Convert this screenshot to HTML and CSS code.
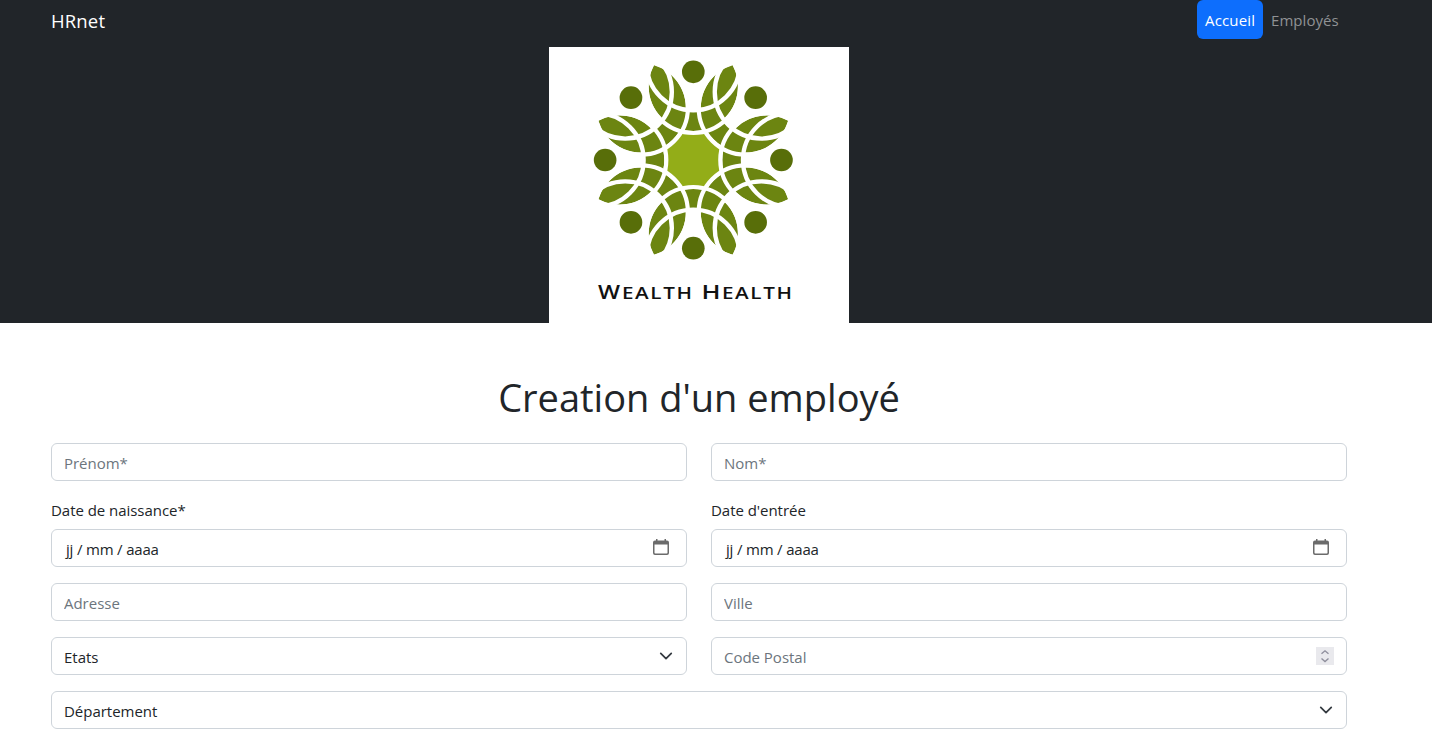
FILE: index.html
```html
<!DOCTYPE html>
<html lang="fr">
<head>
<meta charset="utf-8">
<title>HRnet</title>
<link rel="stylesheet" href="styles.css">
</head>
<body>
<header class="header">
  <nav class="navbar">
    <a class="brand"><span>HRnet</span></a>
    <div class="nav-links">
      <a class="nav-link active"><span>Accueil</span></a>
      <a class="nav-link"><span>Employés</span></a>
    </div>
  </nav>
  <svg class="logo" viewBox="0 0 300 276" role="img" aria-label="Wealth Health">
    <defs>
      <g id="crescent"><path d="M-132.200-242.900A134 134 0 1 0 132.200-242.900A140 140 0 0 1-132.200-242.900Z"/></g>
      <g id="leaf"><path d="M0-181.200A140 140 0 0 1-29.100-275A134 134 0 0 1 0-308A134 134 0 0 1 29.100-275A140 140 0 0 1 0-181.200Z"/></g>
      <g id="rings"><circle cy="-221" r="140" stroke-width="12.5"/><circle cy="-289" r="140" stroke-width="13"/></g>
      <circle id="hole" cy="-221" r="142"/>
      <circle id="dot" cy="-264.500" r="34"/>
    </defs>
    <rect width="300" height="276" fill="#fff"/>
    <g transform="translate(144.3 113) scale(.3333)">
      <circle r="92" fill="#93ad18"/>
      <g fill="#fff">
        <use href="#hole"/><use href="#hole" transform="rotate(45)"/><use href="#hole" transform="rotate(90)"/><use href="#hole" transform="rotate(135)"/><use href="#hole" transform="rotate(180)"/><use href="#hole" transform="rotate(225)"/><use href="#hole" transform="rotate(270)"/><use href="#hole" transform="rotate(315)"/>
      </g>
      <g fill="#6c8511">
        <use href="#crescent"/><use href="#crescent" transform="rotate(45)"/><use href="#crescent" transform="rotate(90)"/><use href="#crescent" transform="rotate(135)"/><use href="#crescent" transform="rotate(180)"/><use href="#crescent" transform="rotate(225)"/><use href="#crescent" transform="rotate(270)"/><use href="#crescent" transform="rotate(315)"/>
        <use href="#leaf" transform="rotate(22.5)"/><use href="#leaf" transform="rotate(67.5)"/><use href="#leaf" transform="rotate(112.5)"/><use href="#leaf" transform="rotate(157.5)"/><use href="#leaf" transform="rotate(202.5)"/><use href="#leaf" transform="rotate(247.5)"/><use href="#leaf" transform="rotate(292.5)"/><use href="#leaf" transform="rotate(337.5)"/>
      </g>
      <g fill="none" stroke="#fff">
        <use href="#rings"/><use href="#rings" transform="rotate(45)"/><use href="#rings" transform="rotate(90)"/><use href="#rings" transform="rotate(135)"/><use href="#rings" transform="rotate(180)"/><use href="#rings" transform="rotate(225)"/><use href="#rings" transform="rotate(270)"/><use href="#rings" transform="rotate(315)"/>
      </g>
      <g fill="#586e09">
        <use href="#dot"/><use href="#dot" transform="rotate(45)"/><use href="#dot" transform="rotate(90)"/><use href="#dot" transform="rotate(135)"/><use href="#dot" transform="rotate(180)"/><use href="#dot" transform="rotate(225)"/><use href="#dot" transform="rotate(270)"/><use href="#dot" transform="rotate(315)"/>
      </g>
    </g>
    <g class="logo-name">
      <text class="cap" x="49" y="252" textLength="22" lengthAdjust="spacingAndGlyphs">W</text>
      <text class="small" x="73" y="252" textLength="71.500" lengthAdjust="spacingAndGlyphs">EALTH</text>
      <text class="cap" x="152.500" y="252" textLength="19" lengthAdjust="spacingAndGlyphs">H</text>
      <text class="small" x="173" y="252" textLength="71.500" lengthAdjust="spacingAndGlyphs">EALTH</text>
    </g>
  </svg>
</header>
<main class="content">
  <h1 class="title"><span>Creation d'un employé</span></h1>
  <form class="form">
    <input class="control" type="text" placeholder="Prénom*">
    <input class="control" type="text" placeholder="Nom*">
    <div class="field">
      <label class="label"><span>Date de naissance*</span></label>
      <div class="control date"><span>jj / mm / aaaa</span>
        <svg class="calendar" viewBox="0 0 16 17"><path fill="#6b6b6b" fill-rule="evenodd" d="M3 0h1.500v1.500h7V0H13v1.500h1a2 2 0 0 1 2 2V14a2 2 0 0 1-2 2H2a2 2 0 0 1-2-2V3.500a2 2 0 0 1 2-2h1zM1.500 5.500v8.300q0 .8.8.800h11.400q.8 0 .8-.8V5.500z"/></svg>
      </div>
    </div>
    <div class="field">
      <label class="label"><span>Date d'entrée</span></label>
      <div class="control date"><span>jj / mm / aaaa</span>
        <svg class="calendar" viewBox="0 0 16 17"><path fill="#6b6b6b" fill-rule="evenodd" d="M3 0h1.500v1.500h7V0H13v1.500h1a2 2 0 0 1 2 2V14a2 2 0 0 1-2 2H2a2 2 0 0 1-2-2V3.500a2 2 0 0 1 2-2h1zM1.500 5.500v8.300q0 .8.8.800h11.400q.8 0 .8-.8V5.500z"/></svg>
      </div>
    </div>
    <input class="control" type="text" placeholder="Adresse">
    <input class="control" type="text" placeholder="Ville">
    <div class="control select"><span>Etats</span>
      <svg class="chevron" viewBox="0 0 16 16"><path d="m2 5 6 6 6-6"/></svg>
    </div>
    <div class="control number"><span>Code Postal</span>
      <svg class="spinner" viewBox="0 0 18 18"><rect width="18" height="18" fill="#e9e9ed"/><path d="M5.500 6.800 9 3.800l3.500 3M5.500 11.500l3.500 3 3.500-3" fill="none" stroke="#8f8f9d" stroke-width="1.400"/></svg>
    </div>
    <div class="control select wide"><span>Département</span>
      <svg class="chevron" viewBox="0 0 16 16"><path d="m2 5 6 6 6-6"/></svg>
    </div>
  </form>
</main>
</body>
</html>
```

FILE: styles.css
```css
* { box-sizing: border-box; }
body {
  margin: 0;
  height: 741px;
  overflow: hidden;
  background: #fff;
  color: #212529;
  font: 15px/24px "Open Sans", "Noto Sans", sans-serif;
}
.header {
  height: 323px;
  padding: 0 85px 0 51px;
  background: #212529;
  display: flex;
  flex-direction: column;
}
.navbar { height: 47px; display: flex; justify-content: space-between; align-items: flex-start; }
.brand { color: #fff; font-size: 18.5px; line-height: 41px; letter-spacing: .15px; }
.nav-links { display: flex; }
.nav-link { height: 39px; padding: 0 8px; line-height: 41px; color: #909294; white-space: nowrap; letter-spacing: .05px; }
.nav-link.active { width: 66px; background: #0d6efd; color: #fff; border-radius: 6px; letter-spacing: .15px; }
.nav-link:last-child { width: 84px; }
.logo { width: 300px; height: 276px; align-self: center; display: block; }
.logo-name { font-family: "Open Sans", sans-serif; font-size: 15.5px; font-weight: 600; fill: #111; }
.logo-name .cap { font-size: 19px; }
.logo-name .small { letter-spacing: 1.2px; }
.content { padding: 0 85px 0 51px; }
.title {
  margin: 50px 0 21px;
  height: 49px;
  font-size: 38px;
  line-height: 49px;
  font-weight: 400;
  text-align: center;
  white-space: nowrap;
}
.form { display: grid; grid-template-columns: 1fr 1fr; gap: 16px 24px; }
.wide { grid-column: 1 / -1; }
.label { display: block; height: 32px; line-height: 26px; letter-spacing: -.04px; }
.control {
  width: 100%;
  height: 38px;
  padding: 2px 12px 0;
  border: 1px solid #ced4da;
  border-radius: 6px;
  background: #fff;
  color: #212529;
  font: inherit;
  letter-spacing: -.02px;
  display: flex;
  align-items: center;
  justify-content: space-between;
}
.control::placeholder { color: #6c757d; opacity: 1; }
.number { color: #6c757d; }
.date { padding-left: 14px; letter-spacing: -.18px; }
.calendar { width: 16px; height: 17px; margin: 0 5px 3px 0; }
.chevron { width: 14px; height: 14px; margin: 0 1px 3px 0; }
.chevron path { fill: none; stroke: #343a40; stroke-width: 2; stroke-linecap: round; stroke-linejoin: round; }
.spinner { width: 18px; height: 18px; margin-bottom: 3px; }
```
